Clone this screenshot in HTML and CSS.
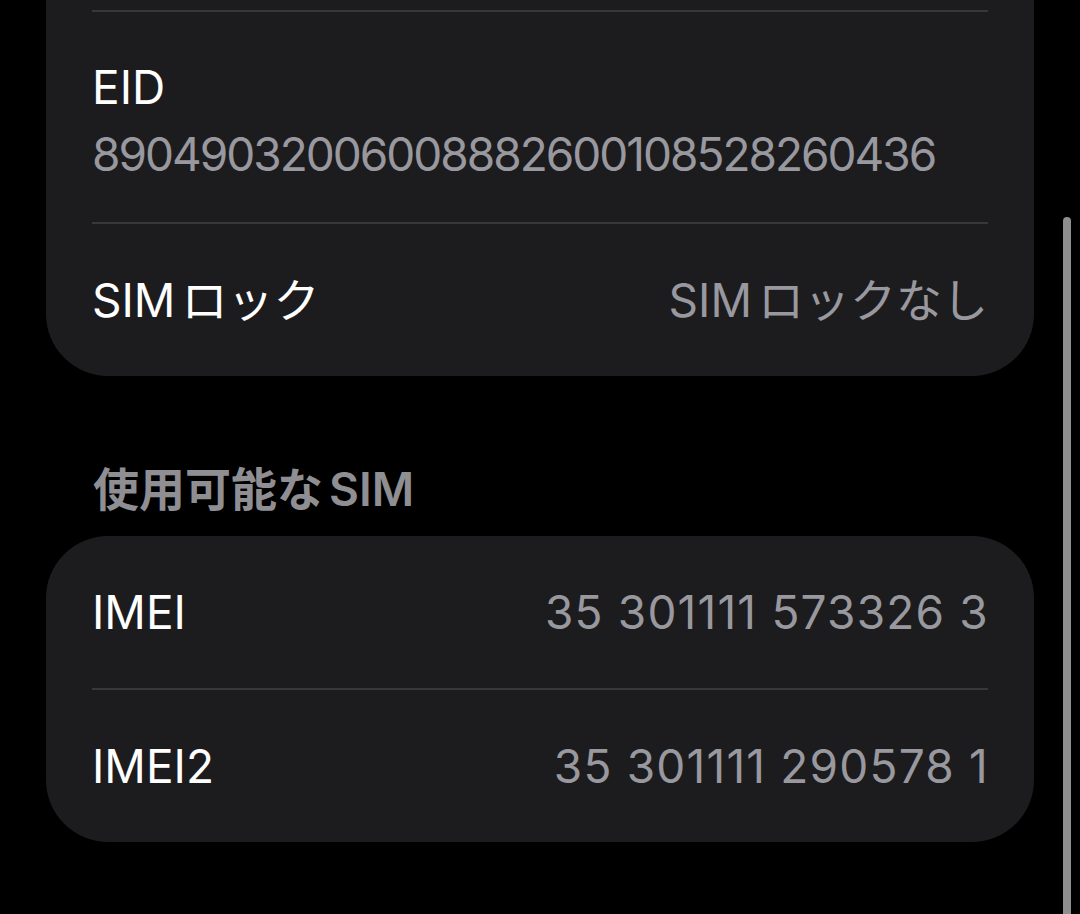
FILE: index.html
```html
<!DOCTYPE html>
<html lang="ja">
<head>
<meta charset="utf-8">
<title>SIM</title>
<link rel="stylesheet" href="styles.css">
</head>
<body>
<main class="page">
  <section class="card card-top-cut">
    <div class="row row-stack">
      <div class="label">EID</div>
      <div class="value value-long">89049032006008882600108528260436</div>
    </div>
    <div class="row row-inline">
      <div class="label">SIM<span class="jp">ロック</span></div>
      <div class="value">SIM<span class="jp">ロックなし</span></div>
    </div>
  </section>

  <h2 class="section-header">使用可能な<span class="lat">SIM</span></h2>

  <section class="card">
    <div class="row row-inline row-first">
      <div class="label">IMEI</div>
      <div class="value value-num">35 301111 573326 3</div>
    </div>
    <div class="row row-inline">
      <div class="label">IMEI2</div>
      <div class="value value-num">35 301111 290578 1</div>
    </div>
  </section>
</main>
<div class="scrollbar"></div>
</body>
</html>
```

FILE: styles.css
```css
html, body {
  margin: 0;
  padding: 0;
  background: #000;
  height: 100%;
  overflow: hidden;
}

body {
  font-family: Inter, "Noto Sans CJK JP", sans-serif;
  font-size: 46px;
  line-height: 56px;
  color: #fff;
  position: relative;
}

.page {
  width: 988px;
  padding-left: 46px;
}

.card {
  background: #1c1c1e;
  border-radius: 62px;
  padding: 0 46px;
}

.card-top-cut {
  border-radius: 0 0 62px 62px;
  padding-top: 10px;
}

.row {
  border-top: 2px solid #38383a;
}

.row-first {
  border-top: none;
}

.row-stack {
  padding: 47px 0 40px;
  display: flex;
  flex-direction: column;
  gap: 11px;
}

.row-inline {
  min-height: 152px;
  display: flex;
  align-items: center;
  justify-content: space-between;
}

.label {
  color: #fff;
}

.value {
  color: #98989e;
}

.value-long {
  letter-spacing: -2px;
}

.value-num {
  letter-spacing: 1.2px;
  margin-right: -1px;
}

.jp {
  margin-left: 6px;
}

.section-header {
  margin: 85px 0 19px;
  padding-left: 47px;
  font-size: 46px;
  line-height: 56px;
  font-weight: 600;
  color: #8e8e93;
}

.section-header .lat {
  margin-left: 6px;
}

.scrollbar {
  position: absolute;
  left: 1063px;
  top: 217px;
  width: 8px;
  height: 720px;
  border-radius: 4px;
  background: #8e8e8e;
}
```
